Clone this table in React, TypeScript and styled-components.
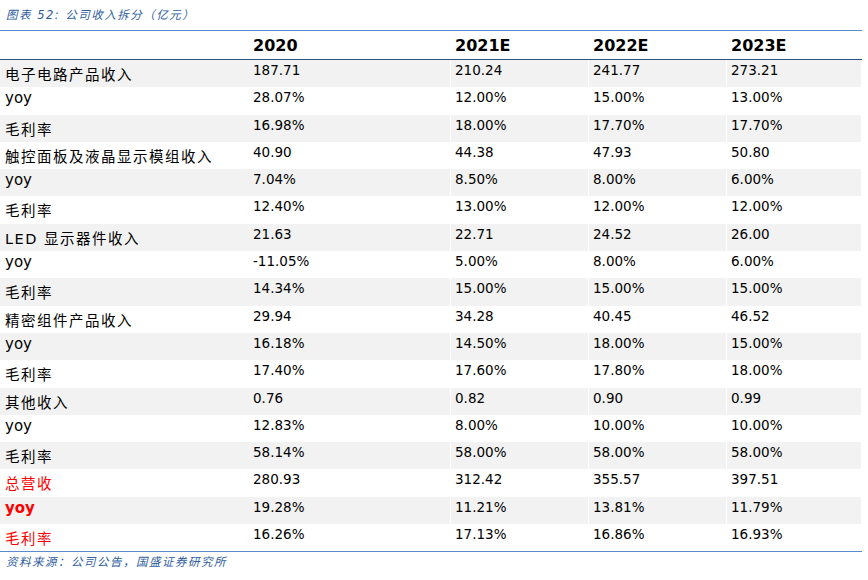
import React from 'react';
import styled, { createGlobalStyle } from 'styled-components';

const GlobalStyle = createGlobalStyle`
  html, body {
    margin: 0;
    padding: 0;
    background: #fff;
  }
`;

const Page = styled.div`
  width: 868px;
  height: 580px;
  padding: 6px 0 0 0;
  box-sizing: border-box;
  font-family: "DejaVu Sans", "Noto Sans CJK SC", sans-serif;
`;

const Caption = styled.div`
  padding-left: 6px;
  height: 24px;
  font-family: "DejaVu Sans", "Noto Sans CJK SC", sans-serif;
  font-style: italic;
  font-size: 11.5px;
  color: #2f5d9e;
  letter-spacing: 1.5px;
`;

const Table = styled.div`
  width: 862px;
  border-top: 1px solid #5b8bcf;
  border-bottom: 1.5px solid #5b8bcf;
`;

const Row = styled.div<{ $shade?: boolean; $head?: boolean }>`
  display: grid;
  grid-template-columns: 249px 202px 138px 138px 135px;
  height: ${(p) => (p.$head ? '28px' : '27.3px')};
  background: ${(p) => (p.$shade ? '#f2f2f2' : '#ffffff')};
  border-bottom: ${(p) => (p.$head ? '1px solid #2e4f80' : 'none')};
`;

const Cell = styled.div<{ $head?: boolean }>`
  padding: ${(p) => (p.$head ? '5px 0 0 4px' : '2px 0 0 4px')};
  font-family: "DejaVu Sans", sans-serif;
  font-size: ${(p) => (p.$head ? '16px' : '13.5px')};
  font-weight: ${(p) => (p.$head ? 700 : 400)};
  color: #000;
  border-right: 1px solid rgba(255, 255, 255, 0.9);
  white-space: nowrap;
`;

const Label = styled.div<{ $red?: boolean; $latin?: boolean }>`
  padding: ${(p) => (p.$latin ? '2px 0 0 5px' : '3px 0 0 5px')};
  font-family: ${(p) =>
    p.$latin
      ? '"DejaVu Sans", sans-serif'
      : '"DejaVu Sans", "Noto Sans CJK SC", sans-serif'};
  font-size: ${(p) => (p.$latin ? '15px' : '14.5px')};
  letter-spacing: ${(p) => (p.$latin ? '0' : '1.5px')};
  font-weight: ${(p) => (p.$red && p.$latin ? 700 : 400)};
  color: ${(p) => (p.$red ? '#ff0000' : '#000')};
  white-space: nowrap;
`;

const Source = styled(Caption)`
  padding-top: 1px;
`;

type Line = { label: string; red?: boolean; values: string[] };

const rows: Line[] = [
  { label: '电子电路产品收入', values: ['187.71', '210.24', '241.77', '273.21'] },
  { label: 'yoy', values: ['28.07%', '12.00%', '15.00%', '13.00%'] },
  { label: '毛利率', values: ['16.98%', '18.00%', '17.70%', '17.70%'] },
  { label: '触控面板及液晶显示模组收入', values: ['40.90', '44.38', '47.93', '50.80'] },
  { label: 'yoy', values: ['7.04%', '8.50%', '8.00%', '6.00%'] },
  { label: '毛利率', values: ['12.40%', '13.00%', '12.00%', '12.00%'] },
  { label: 'LED 显示器件收入', values: ['21.63', '22.71', '24.52', '26.00'] },
  { label: 'yoy', values: ['-11.05%', '5.00%', '8.00%', '6.00%'] },
  { label: '毛利率', values: ['14.34%', '15.00%', '15.00%', '15.00%'] },
  { label: '精密组件产品收入', values: ['29.94', '34.28', '40.45', '46.52'] },
  { label: 'yoy', values: ['16.18%', '14.50%', '18.00%', '15.00%'] },
  { label: '毛利率', values: ['17.40%', '17.60%', '17.80%', '18.00%'] },
  { label: '其他收入', values: ['0.76', '0.82', '0.90', '0.99'] },
  { label: 'yoy', values: ['12.83%', '8.00%', '10.00%', '10.00%'] },
  { label: '毛利率', values: ['58.14%', '58.00%', '58.00%', '58.00%'] },
  { label: '总营收', red: true, values: ['280.93', '312.42', '355.57', '397.51'] },
  { label: 'yoy', red: true, values: ['19.28%', '11.21%', '13.81%', '11.79%'] },
  { label: '毛利率', red: true, values: ['16.26%', '17.13%', '16.86%', '16.93%'] },
];

const years = ['2020', '2021E', '2022E', '2023E'];

const App: React.FC = () => {
  return (
    <Page>
      <GlobalStyle />
      <Caption>图表 52: 公司收入拆分（亿元）</Caption>
      <Table>
        <Row $head>
          <Cell $head />
          {years.map((y) => (
            <Cell $head key={y}>
              {y}
            </Cell>
          ))}
        </Row>
        {rows.map((r, i) => (
          <Row key={i} $shade={i % 2 === 0}>
            <Label $red={r.red} $latin={r.label === 'yoy'}>
              {r.label}
            </Label>
            {r.values.map((v, j) => (
              <Cell key={j}>{v}</Cell>
            ))}
          </Row>
        ))}
      </Table>
      <Source>资料来源：公司公告，国盛证券研究所</Source>
    </Page>
  );
};

export default App;
